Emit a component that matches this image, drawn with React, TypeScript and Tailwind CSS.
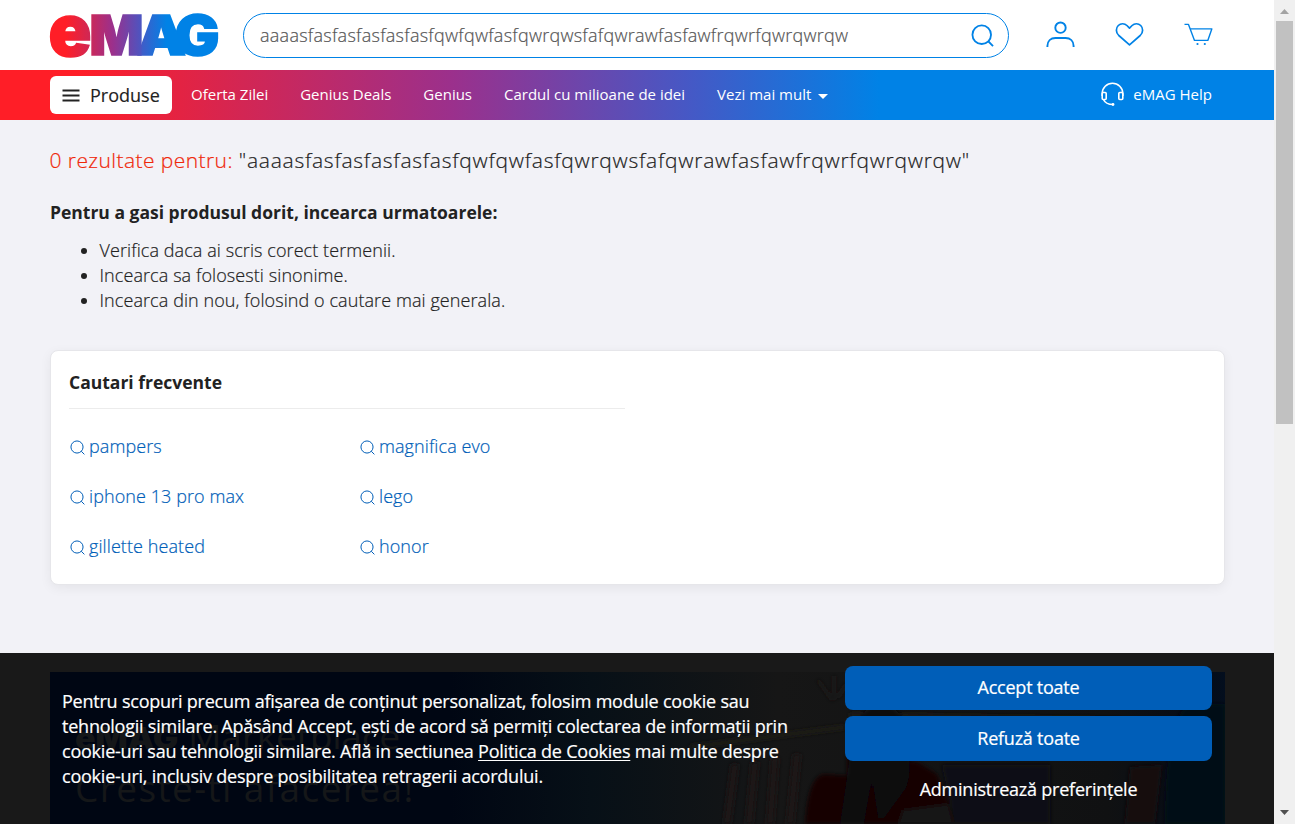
import React from "react";

const QUERY = "aaaasfasfasfasfasfasfqwfqwfasfqwrqwsfafqwrawfasfawfrqwrfqwrqwrqw";

function Logo() {
  return (
    <svg width="170" height="46" viewBox="49 12 170 46" overflow="visible" role="img" aria-label="eMAG">
      <defs>
        <linearGradient id="brandE">
          <stop offset="0.4" stopColor="#ff1e27" />
          <stop offset="1" stopColor="#cc2858" />
        </linearGradient>
        <linearGradient id="brandM">
          <stop offset="0" stopColor="#cc2858" />
          <stop offset="0.43" stopColor="#9b308c" />
          <stop offset="1" stopColor="#4658c5" />
        </linearGradient>
        <linearGradient id="brandA">
          <stop offset="0" stopColor="#4c55c2" />
          <stop offset="0.6" stopColor="#0082e6" />
        </linearGradient>
      </defs>
      <g strokeWidth="1.6" className="font-['Inter',sans-serif] font-black">
        <text x="174.500" y="55" fontSize="55.500" textLength="45" lengthAdjust="spacingAndGlyphs" fill="#0082e6" stroke="#0082e6">G</text>
        <text x="137" y="55" fontSize="55.500" textLength="49" lengthAdjust="spacingAndGlyphs" fill="url(#brandA)" stroke="url(#brandA)">A</text>
        <text x="89.500" y="55" fontSize="55.500" textLength="54" lengthAdjust="spacingAndGlyphs" fill="url(#brandM)" stroke="url(#brandM)">M</text>
        <text x="48.500" y="55.500" fontSize="73" textLength="43" lengthAdjust="spacingAndGlyphs" fill="url(#brandE)" stroke="url(#brandE)">e</text>
      </g>
    </svg>
  );
}

function SearchIcon({ size, stroke }: { size: number; stroke: number }) {
  return (
    <svg width={size} height={size} viewBox="0 0 24 24" fill="none" stroke="currentColor" strokeWidth={stroke} className="shrink-0">
      <circle cx="11.2" cy="11.2" r="9.7" />
      <path d="M18 18l5 5" />
    </svg>
  );
}

function Header() {
  return (
    <header className="flex h-[70px] items-start bg-white pl-[49px] text-[#0082e6]">
      <div className="mt-3"><Logo /></div>
      <div className="ml-6 mt-[13px] flex h-[45px] w-[766px] items-center justify-between rounded-full border border-[#0082e6] pl-4 pr-[14px]">
        <span className="whitespace-nowrap text-[18px] font-light tracking-[0.26px] text-[#555] [-webkit-text-stroke:0.2px]">{QUERY}</span>
        <SearchIcon size={23} stroke={1.9} />
      </div>
      <svg className="ml-[37px] mt-5" width="30" height="30" viewBox="0 0 30 30" fill="none" stroke="currentColor" strokeWidth="1.9">
        <circle cx="14.500" cy="7.700" r="5.200" />
        <path d="M1.400 27v-1c0-5 3.400-8 8-8h10.200c4.600 0 8 3 8 8v1" />
      </svg>
      <svg className="ml-[39px] mt-5" width="30" height="30" viewBox="0 0 30 30" fill="none" stroke="currentColor" strokeWidth="1.700" strokeLinejoin="round">
        <path d="M14.500 8.200l-2.600-2.700a6.100 6.100 0 0 0-8.600 0 6.400 6.400 0 0 0-1.900 4.700c0 2.100.9 3.900 2.400 5.300l10.700 9.300 10.700-9.300c1.500-1.400 2.400-3.200 2.400-5.300a6.400 6.400 0 0 0-1.900-4.700 6.100 6.100 0 0 0-8.600 0Z" />
      </svg>
      <svg className="ml-[39px] mt-5" width="30" height="30" viewBox="0 0 30 30" fill="none" stroke="currentColor" strokeWidth="1.400">
        <path d="M.5 4.400h4l6 16h13.300l4-11.500H6.200" strokeLinejoin="round" />
        <circle cx="13.500" cy="24" r="1.100" fill="currentColor" stroke="none" />
        <circle cx="20.800" cy="24" r="1.100" fill="currentColor" stroke="none" />
      </svg>
    </header>
  );
}

function Nav() {
  return (
    <nav className="flex h-[50px] items-center bg-[linear-gradient(90deg,#ff1e27_6%,#9b308c_35.500%,#4658c5_54%,#0082e6_69%)] pl-[50px] pr-[62px] text-[15px] text-white">
      <button className="flex h-[38px] w-[122px] items-center rounded-md bg-white pl-[12px] text-[18px] text-[#222] [-webkit-text-stroke:0.15px]">
        <svg width="18" height="13" viewBox="0 0 18 13" stroke="currentColor" strokeWidth="1.800"><path d="M.5 1.500h17M.5 6.500h17M.5 11.500h17" /></svg>
        <span className="ml-[10px]">Produse</span>
      </button>
      <div className="mb-[2px] ml-[19px] flex flex-1 items-center gap-8 whitespace-nowrap">
        <a>Oferta Zilei</a>
        <a>Genius Deals</a>
        <a>Genius</a>
        <a>Cardul cu milioane de idei</a>
        <a className="flex items-center gap-[7px]">Vezi mai mult
          <svg className="mt-[4px]" width="10" height="5" viewBox="0 0 10 5"><path d="M0 0h10L5 5z" fill="white" /></svg>
        </a>
      </div>
      <svg className="mb-[1px] mr-2" width="25" height="25" viewBox="0 0 25 25" fill="none" stroke="white" strokeWidth="1.600">
        <path d="M2.200 14v-2.500a10.300 10.300 0 0 1 20.600 0V14" />
        <rect x="2.200" y="10.500" width="4" height="7" rx="1" />
        <rect x="18.800" y="10.500" width="4" height="7" rx="1" />
        <path d="M3.500 17.500c1.500 3.500 4.500 5 9.500 5" />
        <circle cx="13" cy="22.500" r="1.400" fill="white" stroke="none" />
      </svg>
      <a className="mb-[2px]">eMAG Help</a>
    </nav>
  );
}

const searches = ["pampers", "magnifica evo", "iphone 13 pro max", "lego", "gillette heated", "honor"];

function Frequent() {
  return (
    <section className="ml-[50px] mt-[37px] h-[235px] w-[1175px] rounded-lg border border-[#e6e6ea] bg-white pl-[18px] pt-[19px] shadow-[0_3px_12px_rgba(0,0,0,0.06)]">
      <h2 className="h-[39px] w-[556px] border-b border-[#ececec] text-[17.500px] font-bold leading-[25px]">Cautari frecvente</h2>
      <div className="mt-[13px] grid w-[580px] grid-cols-2 text-[18px] font-light leading-[50px] tracking-[0.08px] text-[#005eb8] [-webkit-text-stroke:0.2px]">
        {searches.map((s) => (
          <a key={s} className="flex h-[50px] items-center gap-[4.500px] pl-[0.500px]"><SearchIcon size={15} stroke={1.600} /><span className="mb-[2px]">{s}</span></a>
        ))}
      </div>
    </section>
  );
}

function BannerPhoto() {
  return (
    <svg className="block" width="1175" height="152" viewBox="50 672 1175 152" aria-hidden="true">
      <defs>
        <linearGradient id="shade" x1="0" x2="1" y1="0" y2="0">
          <stop offset="0" stopColor="#000613" />
          <stop offset="0.34" stopColor="#000613" />
          <stop offset="0.46" stopColor="#071017" />
          <stop offset="0.62" stopColor="#161616" />
          <stop offset="0.9" stopColor="#101112" />
          <stop offset="0.98" stopColor="#050c18" />
          <stop offset="1" stopColor="#030e1e" />
        </linearGradient>
        <filter id="soft"><feGaussianBlur stdDeviation="2" /></filter>
      </defs>
      <rect x="50" y="672" width="1175" height="152" fill="url(#shade)" />
      <g filter="url(#soft)">
        <g fill="none">
          <path d="M690 747l155-20M850 715l270 5" stroke="#1f1b19" strokeWidth="4" />
          <path d="M735 764l-8 60M755 762l-6 62M775 758l-5 66M797 754l-7 70" stroke="#1c1918" strokeWidth="8" />
          <path d="M832 700l-14-20M834 700V676M838 698l8-14" stroke="#1d1917" strokeWidth="2" />
        </g>
        <path d="M805 824q3-48 19-50l30 2v48z" fill="#190406" />
        <path d="M847 824v-70l70 8 20 12 20 50z" fill="#190406" />
        <path d="M840 824l14-96q20-40 46-14 16 50 6 74l-22 30h-6l-6-40-8 46z" fill="#0b0809" />
        <path d="M942 765h108v59H955z" fill="#0d1116" />
        <path d="M1130 767l32-2-7 59h-30z" fill="#150c0e" />
        <path d="M903 810l45-6 5 20h-55z" fill="#151517" />
        <path d="M1165 824q0-120 30-120h30v120z" fill="#040a14" />
      </g>
      <g fill="#151719">
        <text x="75" y="749" fontSize="30" className="font-['Inter',sans-serif] font-black" textLength="103" lengthAdjust="spacingAndGlyphs">eMAG</text>
        <text x="188" y="749" fontSize="32" textLength="212" lengthAdjust="spacingAndGlyphs">Marketplace</text>
        <text x="75" y="802" fontSize="37" textLength="338">Creste-ti afacerea!</text>
      </g>
    </svg>
  );
}

function CookieBar() {
  return (
    <section className="relative h-[171px] bg-[#191919] pl-[50px] pt-[19px] text-[18px] tracking-[-0.225px] text-white">
      <BannerPhoto />
      <div className="absolute inset-0 flex pl-[62px] [-webkit-text-stroke:0.2px]">
        <p className="mt-[36px] w-[783px] whitespace-nowrap leading-[25px]">
          Pentru scopuri precum afișarea de conținut personalizat, folosim module cookie sau<br />
          tehnologii similare. Apăsând Accept, ești de acord să permiți colectarea de informații prin<br />
          cookie-uri sau tehnologii similare. Află in sectiunea <a className="underline underline-offset-2">Politica de Cookies</a> mai multe despre<br />
          cookie-uri, inclusiv despre posibilitatea retragerii acordului.
        </p>
        <div className="mt-[13px] flex w-[367px] flex-col">
          <button className="h-11 rounded-lg bg-[#005eb8] pb-[2px]">Accept toate</button>
          <button className="mt-[6px] h-[45px] rounded-lg bg-[#005eb8]">Refuză toate</button>
          <button className="mt-[6px] h-[45px]">Administrează preferințele</button>
        </div>
      </div>
    </section>
  );
}

export default function App() {
  return (
    <div className="flex h-[824px] w-[1295px] overflow-hidden bg-[#f2f2f7] font-['Open_Sans',sans-serif] text-[#222]">
      <div className="flex w-[1274px] flex-col">
        <Header />
        <Nav />
        <main className="h-[533px]">
          <h1 className="ml-[49.500px] mt-[25px] whitespace-nowrap text-[21px] font-light leading-[30px] [-webkit-text-stroke:0.2px]">
            <span className="tracking-[0.43px] text-[#ef2809]">0 rezultate pentru: </span><span className="tracking-[0.75px]">"{QUERY}"</span>
          </h1>
          <h2 className="ml-[50px] mt-[25px] whitespace-nowrap text-[17.500px] font-bold leading-[25px]">Pentru a gasi produsul dorit, incearca urmatoarele:</h2>
          <ul className="ml-[99.500px] mt-[13px] list-disc text-[18px] font-light leading-[25px] tracking-[0.08px] [-webkit-text-stroke:0.2px]">
            <li>Verifica daca ai scris corect termenii.</li>
            <li>Incearca sa folosesti sinonime.</li>
            <li>Incearca din nou, folosind o cautare mai generala.</li>
          </ul>
          <Frequent />
        </main>
        <CookieBar />
      </div>
      <aside className="flex w-[21px] flex-col items-center bg-[#f0f0f0]">
        <svg width="21" height="21" viewBox="0 0 21 21"><path d="M6 14l4.500-5 4.500 5z" fill="#a3a3a3" /></svg>
        <div className="h-[403px] w-[17px] bg-[#c1c1c1]" />
        <svg className="mt-auto" width="21" height="21" viewBox="0 0 21 21"><path d="M6 7l4.500 5L15 7z" fill="#505050" /></svg>
      </aside>
    </div>
  );
}
